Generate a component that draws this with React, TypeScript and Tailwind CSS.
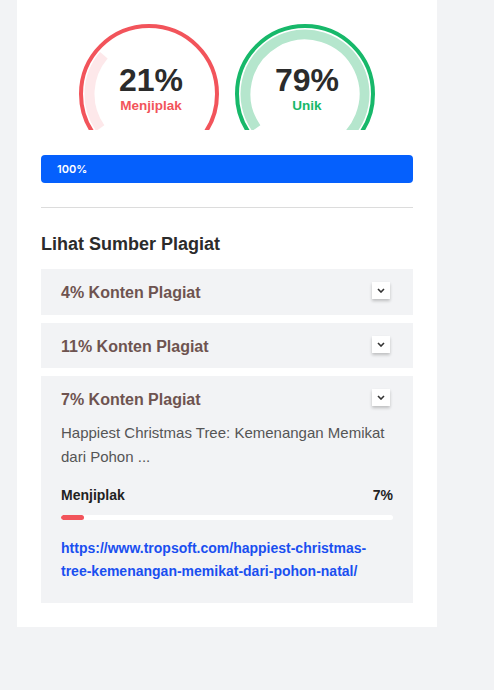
import React from "react"

const font = { fontFamily: '"Liberation Sans", Arial, sans-serif' }

type GaugeProps = {
  value: number
  label: string
  ring: string
  track: string
  labelClass: string
}

// arc measured clockwise from 12 o'clock, starting at the lower left
const arcPath = (pct: number, r: number) => {
  const start = 235
  const sweep = (pct / 100) * 360
  const pt = (deg: number) => {
    const rad = (deg * Math.PI) / 180
    return [70 + r * Math.sin(rad), 70 - r * Math.cos(rad)]
  }
  const [x1, y1] = pt(start)
  const [x2, y2] = pt(start + sweep)
  const large = sweep > 180 ? 1 : 0
  return `M ${x1} ${y1} A ${r} ${r} 0 ${large} 1 ${x2} ${y2}`
}

const Gauge = ({ value, label, ring, track, labelClass }: GaugeProps) => (
  <div className="relative w-[140px] h-[106px] overflow-hidden">
    <svg width="140" height="140" viewBox="0 0 140 140" className="absolute top-0 left-0">
      <circle cx="70" cy="70" r="68" fill="none" stroke={ring} strokeWidth="4" />
      <path d={arcPath(value, 59.5)} fill="none" stroke={track} strokeWidth="10" />
    </svg>
    <div className="absolute inset-x-0 top-[40px] pl-[4px] flex flex-col items-center">
      <span className="text-[32px] leading-none font-bold text-[#2b2b2b]">{value}%</span>
      <span className={`mt-[3px] text-[13.5px] leading-none font-bold ${labelClass}`}>{label}</span>
    </div>
  </div>
)

const Chevron = () => (
  <span className="w-[18px] h-[17px] bg-white shadow-[0_2px_3px_rgba(0,0,0,0.22)] flex items-center justify-center">
    <svg width="8" height="5" viewBox="0 0 8 5">
      <path d="M1 1 L4 4 L7 1" fill="none" stroke="#333" strokeWidth="1.6" />
    </svg>
  </span>
)

const SourceHead = ({ title }: { title: string }) => (
  <div className="flex justify-between items-start pl-5 pr-[23px] pt-[13px]">
    <span className="mt-[2px] text-[16px] leading-[18px] font-bold text-[#6e5350]">{title}</span>
    <Chevron />
  </div>
)

export default function App() {
  return (
    <div className="min-h-[690px] bg-[#f2f3f5]" style={font}>
      <div className="ml-[17px] w-[420px] bg-white px-6 pt-6 pb-6">
        <div className="flex justify-center gap-4">
          <Gauge value={21} label="Menjiplak" ring="#f2545b" track="#fde8ea" labelClass="text-[#f2545b]" />
          <Gauge value={79} label="Unik" ring="#17b86a" track="#b5e6cd" labelClass="text-[#17b86a]" />
        </div>

        <div className="mt-[25px] h-7 rounded bg-[#0560fd] flex items-center px-4">
          <span className="text-[11px] font-semibold text-white" style={{ fontFamily: "Inter, sans-serif" }}>
            100%
          </span>
        </div>

        <div className="mt-6 h-px bg-[#dcdcdc]" />

        <h2 className="mt-[26px] text-[18px] leading-[21px] font-bold text-[#2b2b2b]">Lihat Sumber Plagiat</h2>

        <div className="mt-[14px] flex flex-col gap-2">
          <div className="h-[45.5px] bg-[#f2f3f5]">
            <SourceHead title="4% Konten Plagiat" />
          </div>
          <div className="h-[45.5px] bg-[#f2f3f5]">
            <SourceHead title="11% Konten Plagiat" />
          </div>
          <div className="bg-[#f2f3f5] pb-5">
            <SourceHead title="7% Konten Plagiat" />
            <div className="px-5">
              <p className="mt-3 text-[15px] leading-6 text-[#555]">
                Happiest Christmas Tree: Kemenangan Memikat dari Pohon ...
              </p>
              <div className="mt-[18px] flex justify-between text-[14px] leading-4 font-bold text-[#222]">
                <span>Menjiplak</span>
                <span>7%</span>
              </div>
              <div className="mt-[12px] h-[5px] rounded-full bg-white overflow-hidden">
                <div className="h-full rounded-full bg-[#f2545b]" style={{ width: "7%" }} />
              </div>
              <a
                href="#"
                className="mt-[17px] block text-[14px] leading-[23px] font-bold text-[#1a4ff0]"
              >
                https://www.tropsoft.com/happiest-christmas-tree-kemenangan-memikat-dari-pohon-natal/
              </a>
            </div>
          </div>
        </div>
      </div>
    </div>
  )
}
